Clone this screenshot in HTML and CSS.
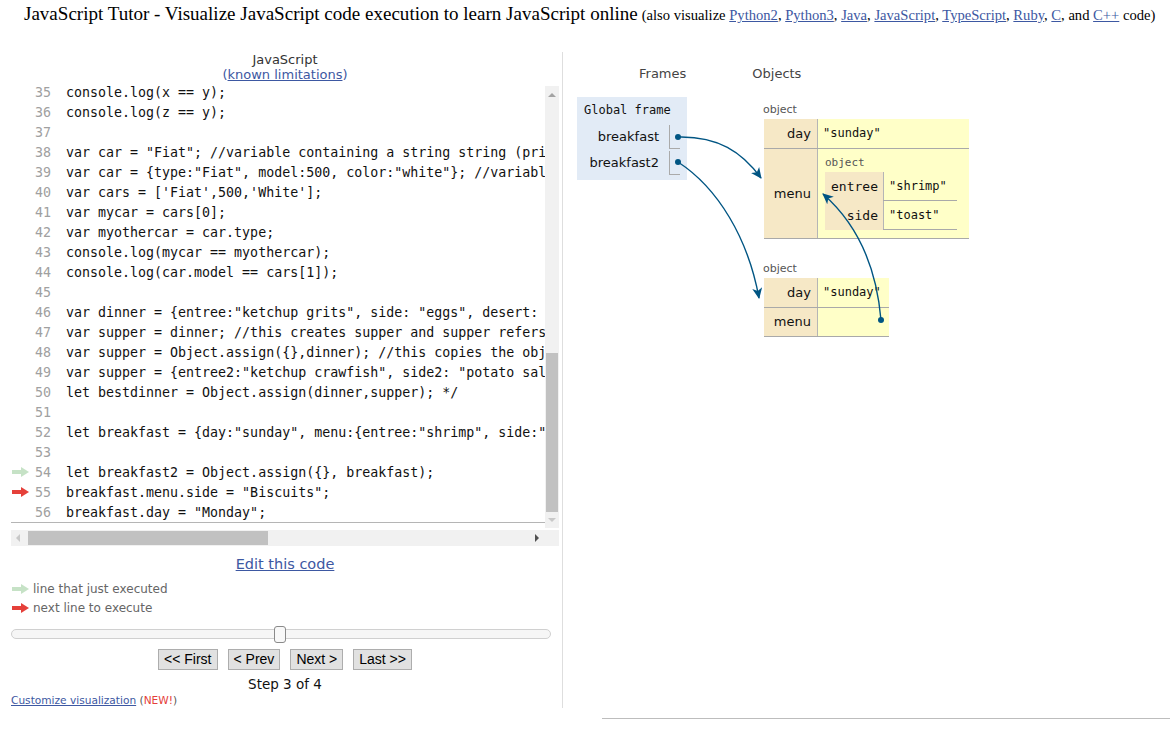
FILE: index.html
```html
<!DOCTYPE html>
<html>
<head>
<meta charset="utf-8">
<title>JavaScript Tutor</title>
<link rel="stylesheet" href="styles.css">
</head>
<body>
<div class="title">
  <span class="big">JavaScript Tutor - Visualize JavaScript code execution to learn JavaScript online</span>
  <span class="small">(also visualize <a href="#">Python2</a>, <a href="#">Python3</a>, <a href="#">Java</a>, <a href="#">JavaScript</a>, <a href="#">TypeScript</a>, <a href="#">Ruby</a>, <a href="#">C</a>, and <a href="#">C++</a> code)</span>
</div>
<div class="main">
  <div class="left">
    <div class="lang">JavaScript</div>
    <div class="limits">(<a href="#">known limitations</a>)</div>
    <div class="codebox">
      <div class="code">
        <div class="row"><span class="gut"></span><span class="ln">35</span><span class="src">console.log(x == y);</span></div>
        <div class="row"><span class="gut"></span><span class="ln">36</span><span class="src">console.log(z == y);</span></div>
        <div class="row"><span class="gut"></span><span class="ln">37</span><span class="src"></span></div>
        <div class="row"><span class="gut"></span><span class="ln">38</span><span class="src">var car = "Fiat"; //variable containing a string string (primitive data type)</span></div>
        <div class="row"><span class="gut"></span><span class="ln">39</span><span class="src">var car = {type:"Fiat", model:500, color:"white"}; //variable containing an object</span></div>
        <div class="row"><span class="gut"></span><span class="ln">40</span><span class="src">var cars = ['Fiat',500,'White'];</span></div>
        <div class="row"><span class="gut"></span><span class="ln">41</span><span class="src">var mycar = cars[0];</span></div>
        <div class="row"><span class="gut"></span><span class="ln">42</span><span class="src">var myothercar = car.type;</span></div>
        <div class="row"><span class="gut"></span><span class="ln">43</span><span class="src">console.log(mycar == myothercar);</span></div>
        <div class="row"><span class="gut"></span><span class="ln">44</span><span class="src">console.log(car.model == cars[1]);</span></div>
        <div class="row"><span class="gut"></span><span class="ln">45</span><span class="src"></span></div>
        <div class="row"><span class="gut"></span><span class="ln">46</span><span class="src">var dinner = {entree:"ketchup grits", side: "eggs", desert: "pie"};</span></div>
        <div class="row"><span class="gut"></span><span class="ln">47</span><span class="src">var supper = dinner; //this creates supper and supper refers to dinner</span></div>
        <div class="row"><span class="gut"></span><span class="ln">48</span><span class="src">var supper = Object.assign({},dinner); //this copies the object</span></div>
        <div class="row"><span class="gut"></span><span class="ln">49</span><span class="src">var supper = {entree2:"ketchup crawfish", side2: "potato salad"};</span></div>
        <div class="row"><span class="gut"></span><span class="ln">50</span><span class="src">let bestdinner = Object.assign(dinner,supper); */</span></div>
        <div class="row"><span class="gut"></span><span class="ln">51</span><span class="src"></span></div>
        <div class="row"><span class="gut"></span><span class="ln">52</span><span class="src">let breakfast = {day:"sunday", menu:{entree:"shrimp", side:"toast"}};</span></div>
        <div class="row"><span class="gut"></span><span class="ln">53</span><span class="src"></span></div>
        <div class="row"><span class="gut"><svg width="17" height="10" viewBox="0 0 17 10"><rect x="0" y="3" width="10" height="4" fill="#c6e2c6"/><polygon points="9,0 17,5 9,10" fill="#c6e2c6"/></svg></span><span class="ln">54</span><span class="src">let breakfast2 = Object.assign({}, breakfast);</span></div>
        <div class="row"><span class="gut"><svg width="17" height="10" viewBox="0 0 17 10"><rect x="0" y="3" width="10" height="4" fill="#e5403a"/><polygon points="9,0 17,5 9,10" fill="#e5403a"/></svg></span><span class="ln">55</span><span class="src">breakfast.menu.side = "Biscuits";</span></div>
        <div class="row"><span class="gut"></span><span class="ln">56</span><span class="src">breakfast.day = "Monday";</span></div>
      </div>
      <div class="vscroll">
        <div class="sb-btn"><span class="tri-up"></span></div>
        <div class="sb-space-v"></div>
        <div class="vthumb"></div>
        <div class="sb-btn sb-down"><span class="tri-down"></span></div>
      </div>
      <div class="hscroll">
        <div class="sb-hbtn"><span class="tri-left"></span></div>
        <div class="hthumb"></div>
        <div class="sb-space-h"></div>
        <div class="sb-hbtn"><span class="tri-right"></span></div>
      </div>
      <div class="corner"></div>
    </div>
    <div class="edit"><a href="#">Edit this code</a></div>
    <div class="legend">
      <div class="leg-row"><svg width="17" height="10" viewBox="0 0 17 10"><rect x="0" y="3" width="10" height="4" fill="#c6e2c6"/><polygon points="9,0 17,5 9,10" fill="#c6e2c6"/></svg><span>line that just executed</span></div>
      <div class="leg-row"><svg width="17" height="10" viewBox="0 0 17 10"><rect x="0" y="3" width="10" height="4" fill="#e5403a"/><polygon points="9,0 17,5 9,10" fill="#e5403a"/></svg><span>next line to execute</span></div>
    </div>
    <div class="slider"><div class="slider-thumb"></div></div>
    <div class="buttons">
      <button class="btn">&lt;&lt; First</button>
      <button class="btn">&lt; Prev</button>
      <button class="btn">Next &gt;</button>
      <button class="btn">Last &gt;&gt;</button>
    </div>
    <div class="step">Step 3 of 4</div>
    <div class="customize"><a href="#">Customize visualization</a> (<span class="new">NEW!</span>)</div>
  </div>
  <div class="right">
    <div class="heads"><span class="h-frames">Frames</span><span class="h-objects">Objects</span></div>
    <div class="viz">
      <div class="frames">
        <div class="frame">
          <div class="frame-title">Global frame</div>
          <div class="var-row"><span class="var-name">breakfast</span><span class="ptr"></span></div>
          <div class="var-row"><span class="var-name">breakfast2</span><span class="ptr"></span></div>
        </div>
      </div>
      <div class="objects">
        <div class="obj">
          <div class="obj-label">object</div>
          <table class="dict dict1">
            <tr class="day-row"><td class="key">day</td><td class="val">"sunday"</td></tr>
            <tr class="menu-row"><td class="key">menu</td><td class="val nested-cell">
              <div class="obj-label">object</div>
              <table class="dict inner">
                <tr><td class="key">entree</td><td class="val">"shrimp"</td></tr>
                <tr><td class="key">side</td><td class="val">"toast"</td></tr>
              </table>
            </td></tr>
          </table>
        </div>
        <div class="obj obj2">
          <div class="obj-label">object</div>
          <table class="dict dict2">
            <tr><td class="key">day</td><td class="val">"sunday"</td></tr>
            <tr><td class="key">menu</td><td class="val"></td></tr>
          </table>
        </div>
      </div>
    </div>
  </div>
</div>
<div class="footline"></div>
<svg class="arrows" width="1170" height="733" viewBox="0 0 1170 733">
  <defs>
    <marker id="ah" markerUnits="userSpaceOnUse" markerWidth="12" markerHeight="12" refX="10" refY="5" orient="auto">
      <path d="M0,0 L11,5 L0,10 L3,5 Z" fill="#005583"/>
    </marker>
  </defs>
  <path d="M678,137 C718,136 742,152 761,178" stroke="#005583" stroke-width="1.4" fill="none" marker-end="url(#ah)"/>
  <path d="M678,162 C718,188 748,238 759,298" stroke="#005583" stroke-width="1.4" fill="none" marker-end="url(#ah)"/>
  <path d="M881,320 C876,262 855,222 823,194" stroke="#005583" stroke-width="1.4" fill="none" marker-end="url(#ah)"/>
  <circle cx="678" cy="137" r="3" fill="#005583"/>
  <circle cx="678" cy="162" r="3" fill="#005583"/>
  <circle cx="881" cy="320" r="3" fill="#005583"/>
</svg>
</body>
</html>
```

FILE: styles.css
```css
html, body {
  margin: 0;
  padding: 0;
  background: #fff;
}
body {
  position: relative;
  width: 1170px;
  height: 733px;
  overflow: hidden;
  font-family: "DejaVu Sans", Verdana, sans-serif;
  color: #000;
}
a {
  color: #3d58a2;
  text-decoration: underline;
}

/* Title */
.title {
  padding: 4px 0 0 24px;
  height: 24px;
  line-height: 20px;
  white-space: nowrap;
  font-family: "Liberation Serif", "Times New Roman", serif;
}
.title .big {
  font-size: 19.05px;
}
.title .small {
  font-size: 14.6px;
}

.main {
  display: flex;
  margin-top: 24px;
  height: 656px;
}

/* Left panel */
.left {
  margin-left: 11px;
  width: 548px;
  display: flex;
  flex-direction: column;
}
.lang {
  font-size: 13px;
  line-height: 15px;
  text-align: center;
  color: #333;
}
.limits {
  font-size: 13px;
  line-height: 15px;
  text-align: center;
  color: #3d58a2;
}
.codebox {
  display: grid;
  grid-template-columns: 534px 14px;
  grid-template-rows: 441px 16px;
  row-gap: 7px;
}
.code {
  grid-row: 1;
  grid-column: 1;
  border-bottom: 1px solid #b5b5b5;
  overflow: hidden;
}
.row {
  display: flex;
  height: 20px;
  align-items: center;
  font-family: "DejaVu Sans Mono", "Liberation Mono", monospace;
  font-size: 13.3px;
  white-space: pre;
}
.gut {
  width: 20px;
  flex: none;
  display: flex;
  align-items: center;
  padding-left: 1px;
  box-sizing: border-box;
}
.gut svg {
  display: block;
}
.ln {
  width: 20px;
  flex: none;
  text-align: right;
  color: #a0a0a0;
  margin-right: 15px;
}
.src {
  color: #111;
}

.vscroll {
  grid-row: 1;
  grid-column: 2;
  margin-top: 4px;
  height: 442px;
  background: #f1f1f1;
  display: flex;
  flex-direction: column;
}
.sb-btn {
  height: 17px;
  display: flex;
  align-items: center;
  justify-content: center;
}
.sb-down {
  height: 16px;
}
.sb-space-v {
  height: 250px;
}
.vthumb {
  height: 159px;
  background: #c1c1c1;
  margin: 0 1px;
}
.tri-up {
  width: 0;
  height: 0;
  border-left: 4px solid transparent;
  border-right: 4px solid transparent;
  border-bottom: 4px solid #a3a3a3;
}
.tri-down {
  width: 0;
  height: 0;
  border-left: 4px solid transparent;
  border-right: 4px solid transparent;
  border-top: 4px solid #c8c8c8;
}
.hscroll {
  grid-row: 2;
  grid-column: 1;
  background: #f1f1f1;
  display: flex;
  align-items: stretch;
}
.sb-hbtn {
  width: 14px;
  display: flex;
  align-items: center;
  justify-content: center;
}
.sb-hbtn:last-child {
  width: 16px;
}
.hthumb {
  margin: 1px 0 1px 3px;
  width: 240px;
  background: #c1c1c1;
}
.sb-space-h {
  flex: 1;
}
.tri-left {
  width: 0;
  height: 0;
  border-top: 4px solid transparent;
  border-bottom: 4px solid transparent;
  border-right: 4px solid #c8c8c8;
}
.tri-right {
  width: 0;
  height: 0;
  border-top: 4px solid transparent;
  border-bottom: 4px solid transparent;
  border-left: 4px solid #505050;
}
.corner {
  grid-row: 2;
  grid-column: 2;
  background: #f1f1f1;
}

.edit {
  margin-top: 9px;
  line-height: 18px;
  font-size: 14.5px;
  text-align: center;
}
.legend {
  margin-top: 6px;
}
.leg-row {
  height: 19px;
  display: flex;
  align-items: center;
  font-size: 12px;
  color: #666;
}
.leg-row svg {
  margin: 0 4px 0 1px;
  display: block;
}
.slider {
  position: relative;
  margin-top: 12px;
  width: 540px;
  height: 10px;
  border: 1px solid #d0d0d0;
  border-radius: 5px;
  background: #f6f6f6;
  box-sizing: border-box;
}
.slider-thumb {
  position: absolute;
  left: 262px;
  top: -4px;
  width: 12px;
  height: 17px;
  border: 1px solid #8a8a8a;
  border-radius: 3px;
  background: #f8f8f8;
  box-sizing: border-box;
}
.buttons {
  margin-top: 10px;
  display: flex;
  justify-content: center;
  gap: 10px;
  height: 21px;
}
.btn {
  font-family: "Liberation Sans", Arial, sans-serif;
  font-size: 14px;
  height: 21px;
  padding: 0 5px;
  border: 1px solid #adadad;
  background: #e1e1e1;
  color: #000;
  border-radius: 0;
  line-height: 19px;
}
.step {
  margin-top: 6px;
  line-height: 16px;
  font-size: 13.5px;
  text-align: center;
  color: #111;
}
.customize {
  margin-top: 1px;
  line-height: 14px;
  font-size: 10.6px;
  color: #555;
}
.customize .new {
  color: #e5403a;
}

/* Right panel */
.right {
  margin-left: 3px;
  border-left: 1px solid #dedede;
  flex: 1;
  font-size: 13px;
}
.heads {
  padding-top: 14px;
  line-height: 16px;
  color: #444;
}
.h-frames {
  margin-left: 76px;
}
.h-objects {
  margin-left: 66px;
}
.viz {
  margin-top: 15px;
  display: flex;
  align-items: flex-start;
}
.frames {
  padding-left: 14px;
}
.frame {
  width: 110px;
  background: #e2ebf6;
  padding: 5px 0 5px 0;
  box-sizing: border-box;
}
.frame-title {
  font-family: "DejaVu Sans Mono", "Liberation Mono", monospace;
  font-size: 12px;
  line-height: 16px;
  padding-left: 7px;
  margin-bottom: 6px;
  color: #111;
}
.var-row {
  display: flex;
  justify-content: flex-end;
  align-items: center;
  height: 25px;
  margin-bottom: 1px;
}
.var-row:last-child {
  margin-bottom: 0;
}
.var-name {
  font-size: 13px;
  line-height: 16px;
  color: #111;
}
.ptr {
  margin-left: 10px;
  margin-right: 7px;
  width: 11px;
  height: 24px;
  border-left: 1px solid #aaa;
  border-bottom: 1px solid #aaa;
  box-sizing: border-box;
}
.objects {
  margin-left: 76px;
}
.obj-label {
  padding-top: 6px;
  font-size: 11px;
  line-height: 14px;
  color: #555;
}
.dict {
  border-collapse: collapse;
  border-spacing: 0;
  margin: 2px 0 0 1px;
}
.dict td {
  padding: 0;
}
.dict .key {
  background: #f6e8c6;
  text-align: right;
  font-size: 13px;
  color: #111;
  border-bottom: 1px solid #a9a9a9;
  padding-right: 6px;
}
.dict .val {
  background: #ffffc8;
  border-left: 1px solid #b5b5b5;
  border-bottom: 1px solid #a9a9a9;
  font-family: "DejaVu Sans Mono", "Liberation Mono", monospace;
  font-size: 12px;
  padding-left: 5px;
  vertical-align: middle;
  color: #111;
}
.dict1 .day-row {
  height: 29px;
}
.dict1 .key {
  width: 47px;
}
.dict1 > tbody > tr > .val {
  width: 146px;
}
.dict1 .menu-row {
  height: 89px;
}
.dict1 > tbody > tr > .nested-cell {
  width: 132px;
  padding: 0 12px 8px 7px;
  vertical-align: top;
}
.nested-cell .obj-label {
  padding-top: 7px;
}
.dict.inner {
  margin: 2px 0 0 0;
}
.dict.inner tr {
  height: 29px;
}
.dict.inner .key {
  border-bottom: none;
  width: 53px;
  padding-right: 5px;
}
.dict.inner .val {
  width: 68px;
  padding-left: 5px;
}
.obj2 {
  margin-top: 23px;
}
.obj2 .obj-label {
  padding-top: 0;
}
.dict2 tr {
  height: 29px;
}
.dict2 .key {
  width: 47px;
}
.dict2 .val {
  width: 66px;
}

.footline {
  margin: 10px 0 0 602px;
  border-top: 1px solid #bdbdbd;
}
.arrows {
  position: absolute;
  top: 0;
  left: 0;
  pointer-events: none;
}
```
